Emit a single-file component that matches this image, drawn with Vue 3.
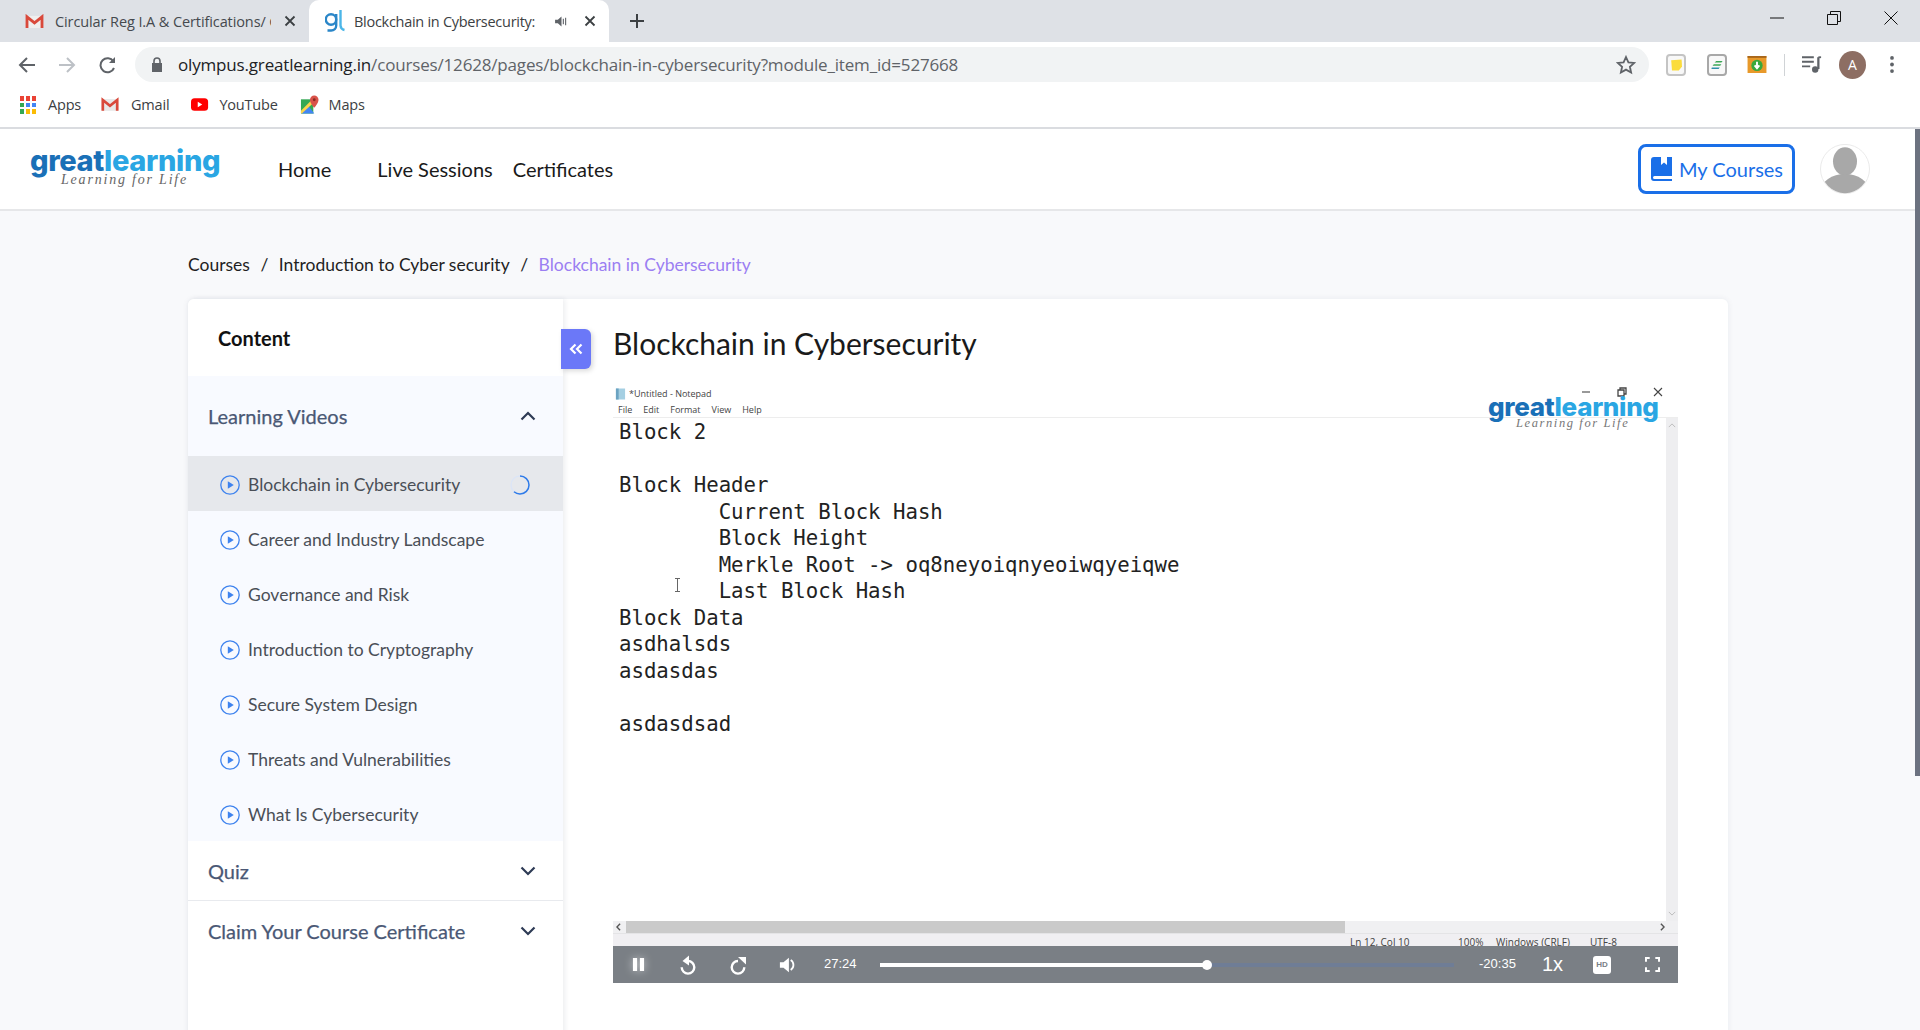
<script setup>
const bookmarks = [
  { name: 'Apps', icon: 'apps' },
  { name: 'Gmail', icon: 'gmail' },
  { name: 'YouTube', icon: 'yt' },
  { name: 'Maps', icon: 'maps' }
]
const appColors = ['#ea4335', '#ea4335', '#ea4335', '#34a853', '#4285f4', '#4285f4', '#34a853', '#fbbc05', '#fbbc05']
const lessons = [
  'Blockchain in Cybersecurity',
  'Career and Industry Landscape',
  'Governance and Risk',
  'Introduction to Cryptography',
  'Secure System Design',
  'Threats and Vulnerabilities',
  'What Is Cybersecurity'
]
const noteLines = [
  'Block 2',
  '',
  'Block Header',
  '\tCurrent Block Hash',
  '\tBlock Height',
  '\tMerkle Root -> oq8neyoiqnyeoiwqyeiqwe',
  '\tLast Block Hash',
  'Block Data',
  'asdhalsds',
  'asdasdas',
  '',
  'asdasdsad'
]
</script>

<template>
  <div class="window">
    <!-- tab strip -->
    <div class="tabstrip">
      <div class="tab">
        <svg class="gmail" viewBox="0 0 20 16"><path d="M1 2h18v13H1z" fill="#efefef" /><path d="M2 15V3l8 6.500L18 3v12" fill="none" stroke="#d9493b" stroke-width="3" /></svg>
        <span class="tab-title">Circular Reg I.A &amp; Certifications/ C</span>
        <svg class="tab-x" viewBox="0 0 12 12"><path d="M1.500 1.500l9 9M10.500 1.500l-9 9" stroke="#3c4043" stroke-width="1.800" /></svg>
      </div>
      <div class="tab active">
        <svg class="gl-icon" viewBox="0 0 21 24">
          <circle cx="6" cy="9.500" r="5.200" fill="none" stroke="#2a86c8" stroke-width="2.400" />
          <path d="M11.200 4v11.500a5 5 0 0 1-5 5H2.500" fill="none" stroke="#2a86c8" stroke-width="2.400" />
          <path d="M15.500 0v15.500a5 5 0 0 0 4 4.500" fill="none" stroke="#4bb6e8" stroke-width="2.400" />
        </svg>
        <span class="tab-title t2">Blockchain in Cybersecurity: I</span>
        <svg class="speaker" viewBox="0 0 14 12"><path d="M0 4h3l4-3.500v11L3 8H0z" fill="#5f6368" /><path d="M9 3v6M11.500 2v8" stroke="#5f6368" stroke-width="1.200" /></svg>
        <svg class="tab-x" viewBox="0 0 12 12"><path d="M1.500 1.500l9 9M10.500 1.500l-9 9" stroke="#3c4043" stroke-width="1.800" /></svg>
      </div>
      <svg class="newtab" viewBox="0 0 14 14"><path d="M7 0v14M0 7h14" stroke="#3c4043" stroke-width="2" /></svg>
      <div class="winctl">
        <svg viewBox="0 0 14 14"><path d="M0 7h14" stroke="#111" stroke-width="1" /></svg>
        <svg viewBox="0 0 14 14"><path d="M.5 3.500h10v10H.5zM3.500 3V.5h10v10H11" fill="none" stroke="#111" stroke-width="1" /></svg>
        <svg viewBox="0 0 14 14"><path d="M.5.5l13 13M13.500.5l-13 13" stroke="#111" stroke-width="1" /></svg>
      </div>
    </div>

    <!-- toolbar -->
    <div class="toolbar">
      <svg class="nav" viewBox="0 0 18 18"><path d="M17 9H2M9 2L2 9l7 7" fill="none" stroke="#5f6368" stroke-width="2" /></svg>
      <svg class="nav" viewBox="0 0 18 18"><path d="M1 9h15M9 2l7 7-7 7" fill="none" stroke="#bdc1c6" stroke-width="2" /></svg>
      <svg class="nav reload" viewBox="0 0 18 18"><path d="M15 12a7 7 0 1 1-.6-6.500" fill="none" stroke="#5f6368" stroke-width="2" /><path d="M16 1v6h-6z" fill="#5f6368" /></svg>
      <div class="omnibox">
        <svg class="lock" viewBox="0 0 12 15"><path d="M1 6h10v9H1z" fill="#5f6368" /><path d="M3 6V4a3 3 0 0 1 6 0v2" fill="none" stroke="#5f6368" stroke-width="1.600" /></svg>
        <span class="url"><b>olympus.greatlearning.in</b>/courses/12628/pages/blockchain-in-cybersecurity?module_item_id=527668</span>
        <svg class="star" viewBox="0 0 20 20"><path d="M10 2l2.400 5.300 5.800.6-4.300 3.900 1.200 5.700L10 14.600l-5.100 2.900 1.200-5.700-4.300-3.900 5.800-.6z" fill="none" stroke="#5f6368" stroke-width="1.800" /></svg>
      </div>
      <div class="ext-box"><svg viewBox="0 0 20 22"><path d="M4 5l13-1 .5 9-4 5H5z" fill="#fbdc3c" /></svg></div>
      <div class="ext-box gray"><svg viewBox="0 0 20 22"><path d="M9 6h8l-1.500 2H7zM6 10h9.500L14 12H4.500z" fill="#3aa655" /><path d="M3.500 14h10l-1.500 2H3z" fill="#2f8fa8" /></svg></div>
      <svg class="ext-folder" viewBox="0 0 20 18"><path d="M0 0h20v18H0z" fill="#e8992a" /><path d="M0 0h20v2H0z" fill="#a9671b" /><circle cx="10" cy="10" r="6" fill="#38a83c" /><path d="M10 6v6M7.500 10l2.500 3 2.500-3" fill="none" stroke="#fff" stroke-width="2" /></svg>
      <i class="tool-sep"></i>
      <svg class="media" viewBox="0 0 22 20"><path d="M0 2h13M0 7h13M0 12h9" stroke="#5f6368" stroke-width="2" /><path d="M18 2v13" stroke="#5f6368" stroke-width="2.500" /><path d="M18 2h3" stroke="#5f6368" stroke-width="2" /><circle cx="14.500" cy="15.500" r="3.500" fill="#5f6368" /></svg>
      <span class="profile">A</span>
      <svg class="kebab" viewBox="0 0 4 18"><circle cx="2" cy="2" r="2" fill="#5f6368" /><circle cx="2" cy="9" r="2" fill="#5f6368" /><circle cx="2" cy="16" r="2" fill="#5f6368" /></svg>
    </div>

    <!-- bookmarks -->
    <div class="bookmarks">
      <div v-for="b in bookmarks" :key="b.name" class="bookmark">
        <span v-if="b.icon === 'apps'" class="apps-grid"><i v-for="(c, i) in appColors" :key="i" :style="{ background: c }"></i></span>
        <svg v-else-if="b.icon === 'gmail'" class="bm-icon" viewBox="0 0 20 16"><path d="M1 2h18v13H1z" fill="#e8e8e8" /><path d="M2 15V3l8 6.500L18 3v12" fill="none" stroke="#d9493b" stroke-width="3" /></svg>
        <svg v-else-if="b.icon === 'yt'" class="bm-icon" viewBox="0 0 20 16"><rect x="0" y="1" width="19" height="14" rx="4" fill="#f00" /><path d="M7.500 5v6l5-3z" fill="#fff" /></svg>
        <svg v-else class="bm-icon maps" viewBox="0 0 20 20"><path d="M1 4h13v15H1z" fill="#34a853" /><path d="M1 19L9 11l6 8z" fill="#4285f4" /><path d="M1 16L12 5h2v3L2 19H1z" fill="#fbd44a" /><path d="M15 0a4.500 4.500 0 0 1 4.500 4.500C19.500 8 15 13 15 13s-4.500-5-4.500-8.500A4.500 4.500 0 0 1 15 0z" fill="#d9534a" /><circle cx="15" cy="4.500" r="1.500" fill="#8a2d24" /></svg>
        <span>{{ b.name }}</span>
      </div>
    </div>

    <!-- page -->
    <div class="page">
      <header class="site-header">
        <div class="logo">
          <div class="logo-word"><span class="dark">great</span><span class="light">learning</span></div>
          <div class="logo-tag">Learning for Life</div>
        </div>
        <nav class="site-nav">
          <a class="home">Home</a>
          <a class="live">Live Sessions</a>
          <a>Certificates</a>
        </nav>
        <button class="my-courses">
          <svg viewBox="0 0 21 24"><path d="M3 0h18v19H3.500a1.500 1.500 0 0 0 0 3H21v2H3a3 3 0 0 1-3-3V3a3 3 0 0 1 3-3z" fill="#1a6fe8" /><path d="M10 0v8l3-2.500L16 8V0z" fill="#fff" /></svg>
          My Courses
        </button>
        <svg class="avatar" viewBox="0 0 50 60" preserveAspectRatio="none">
          <ellipse cx="25" cy="30" rx="24.500" ry="29.500" fill="#fff" stroke="#e8e8e8" />
          <clipPath id="av"><ellipse cx="25" cy="30" rx="24" ry="29" /></clipPath>
          <g clip-path="url(#av)" fill="#a8a8a8">
            <ellipse cx="25" cy="21" rx="12" ry="17" />
            <ellipse cx="25" cy="56" rx="24" ry="20" />
          </g>
        </svg>
      </header>

      <div class="crumbs">
        <a>Courses</a><i>/</i><a>Introduction to Cyber security</a><i>/</i><a class="current">Blockchain in Cybersecurity</a>
      </div>

      <div class="layout">
        <aside class="sidebar">
          <div class="side-title">Content</div>
          <div class="group-head open">
            Learning Videos
            <svg viewBox="0 0 16 10"><path d="M1.500 8.500L8 2l6.500 6.500" fill="none" stroke="#2e3b55" stroke-width="2.200" /></svg>
          </div>
          <ul class="lessons">
            <li v-for="(l, i) in lessons" :key="l" :class="{ active: i === 0 }">
              <svg class="play" viewBox="0 0 20 20"><circle cx="10" cy="10" r="9.200" fill="none" stroke="#3f83ee" stroke-width="1.300" /><path d="M7.800 6.300v7.400l6-3.700z" fill="#3f83ee" /></svg>
              <span>{{ l }}</span>
              <svg v-if="i === 0" class="spinner" viewBox="0 0 20 20"><circle cx="10" cy="10" r="9" fill="none" stroke="#dbe5f7" stroke-width="1.300" /><path d="M10 1a9 9 0 0 1 0 18 9 9 0 0 1-6-2.300" fill="none" stroke="#2f7be8" stroke-width="1.500" /></svg>
            </li>
          </ul>
          <div class="group-head">
            Quiz
            <svg viewBox="0 0 16 10"><path d="M1.500 1.500L8 8l6.500-6.500" fill="none" stroke="#2e3b55" stroke-width="2.200" /></svg>
          </div>
          <div class="group-head last">
            Claim Your Course Certificate
            <svg viewBox="0 0 16 10"><path d="M1.500 1.500L8 8l6.500-6.500" fill="none" stroke="#2e3b55" stroke-width="2.200" /></svg>
          </div>
          <button class="collapse">
            <svg viewBox="0 0 14 12"><path d="M6.500 1.500L2 6l4.500 4.500M12.500 1.500L8 6l4.500 4.500" fill="none" stroke="#fff" stroke-width="2.200" /></svg>
          </button>
        </aside>

        <main class="content">
          <h1>Blockchain in Cybersecurity</h1>
          <div class="player">
            <div class="np-title">
              <svg viewBox="0 0 12 12"><path d="M1 0h10v12H1z" fill="#a5cfe2" /><path d="M1 0h3v12H1z" fill="#6ba3c2" /></svg>
              *Untitled - Notepad
            </div>
            <div class="np-menu"><span>File</span><span>Edit</span><span>Format</span><span>View</span><span>Help</span></div>
            <div class="np-body">
              <div class="np-text">
                <div v-for="(line, i) in noteLines" :key="i" class="np-line">{{ line }}</div>
              </div>
              <div class="np-vscroll">
                <svg viewBox="0 0 10 6"><path d="M1 5l4-4 4 4" fill="none" stroke="#bbb" stroke-width="1.200" /></svg>
                <svg viewBox="0 0 10 6"><path d="M1 1l4 4 4-4" fill="none" stroke="#bbb" stroke-width="1.200" /></svg>
              </div>
            </div>
            <div class="np-hscroll">
              <svg viewBox="0 0 6 10"><path d="M5 1L1 5l4 4" fill="none" stroke="#555" stroke-width="1.800" /></svg>
              <div class="np-thumb"></div>
              <svg viewBox="0 0 6 10"><path d="M1 1l4 4-4 4" fill="none" stroke="#555" stroke-width="1.800" /></svg>
            </div>
            <div class="np-status">
              <span class="s1">Ln 12, Col 10</span><span class="s2">100%</span><span class="s3">Windows (CRLF)</span><span class="s4">UTF-8</span>
            </div>

            <div class="controls">
              <svg class="c-pause" viewBox="0 0 14 16"><path d="M1 1h4.500v14H1zM8.500 1H13v14H8.500z" fill="#fff" /></svg>
              <svg class="c-icon" viewBox="0 0 18 20"><path d="M9 6a6.300 6.300 0 1 1-6.300 6.300" fill="none" stroke="#fff" stroke-width="2.400" /><path d="M10 .5L3.500 6l6.500 4.500z" fill="#fff" /></svg>
              <svg class="c-icon" viewBox="0 0 18 20"><path d="M9 6a6.300 6.300 0 1 0 6.300 6.300" fill="none" stroke="#fff" stroke-width="2.400" /><path d="M9 2h8v7.500z" fill="#fff" /></svg>
              <svg class="c-icon" viewBox="0 0 20 20"><path d="M1 7h4l6-5v16l-6-5H1z" fill="#fff" /><path d="M13 4.500a6.500 6.500 0 0 1 0 11" fill="none" stroke="#fff" stroke-width="2" /></svg>
              <span class="c-time">27:24</span>
              <div class="c-track"><div class="c-played"><i></i></div></div>
              <span class="c-remain">-20:35</span>
              <span class="c-speed">1x</span>
              <span class="c-hd">HD</span>
              <svg class="c-full" viewBox="0 0 16 16"><path d="M1 5V1h4M11 1h4v4M15 11v4h-4M5 15H1v-4" fill="none" stroke="#fff" stroke-width="2.200" /></svg>
            </div>

            <div class="np-overlay">
              <div class="np-winctl">
                <svg viewBox="0 0 10 10"><path d="M1 5h8" stroke="#555" stroke-width="1.200" /></svg>
                <svg viewBox="0 0 10 10"><path d="M1 3h6v6H1zM3 3V1h6v6H7" fill="none" stroke="#444" stroke-width="1.300" /></svg>
                <svg viewBox="0 0 10 10"><path d="M1 1l8 8M9 1L1 9" stroke="#444" stroke-width="1.100" /></svg>
              </div>
              <div class="logo small">
                <div class="logo-word"><span class="dark">great</span><span class="light">learning</span></div>
                <div class="logo-tag">Learning for Life</div>
              </div>
            </div>
            <svg class="ibeam" viewBox="0 0 7 14"><path d="M1 .5h5M3.500.5v13M1 13.500h5" fill="none" stroke="#666" /></svg>
          </div>
        </main>
      </div>
      <div class="page-scroll"></div>
    </div>
  </div>
</template>

<style>
html, body { margin: 0; background: #fff; }
</style>

<style scoped>
.window {
  width: 1920px;
  height: 1030px;
  overflow: hidden;
  display: flex;
  flex-direction: column;
  font-family: "Lato", "Liberation Sans", sans-serif;
}
.tabstrip {
  height: 42px;
  flex: none;
  background: #dee1e6;
  display: flex;
  align-items: flex-end;
  position: relative;
  padding-left: 9px;
  font-family: "Open Sans", "Liberation Sans", sans-serif;
}
.tab {
  width: 300px;
  height: 42px;
  display: flex;
  align-items: center;
  padding-left: 16px;
  box-sizing: border-box;
  font-size: 14.500px;
  color: #45494e;
  flex: none;
}
.tab.active {
  background: #fff;
  border-radius: 10px 10px 0 0;
  color: #3c4043;
}
.gmail { width: 19px; height: 15px; margin-right: 11px; flex: none; }
.tab-title { width: 216px; overflow: hidden; white-space: nowrap; flex: none; letter-spacing: -0.1px; }
.tab-title.t2 { width: 183px; letter-spacing: -0.28px; }
.tab-x { width: 12px; height: 12px; margin-left: 13px; flex: none; }
.tab.active .tab-x { margin-left: 16px; }
.gl-icon { width: 21px; height: 24px; margin: 2px 8px 0 0; flex: none; }
.speaker { width: 13px; height: 11px; margin-left: 18px; flex: none; }
.newtab { width: 14px; height: 14px; margin: 0 0 14px 21px; }
.winctl {
  margin-left: auto;
  display: flex;
  gap: 43px;
  height: 42px;
  padding: 11px 22px 0 0;
  box-sizing: border-box;
}
.winctl svg { width: 14px; height: 14px; }

.toolbar {
  height: 45px;
  flex: none;
  display: flex;
  align-items: center;
  padding-left: 18px;
  background: #fff;
  position: relative;
}
.nav { width: 18px; height: 18px; margin-right: 22px; flex: none; }
.nav.reload { margin-left: 1px; margin-right: 21px; }
.omnibox {
  width: 1514px;
  margin-left: -3px;
  height: 35px;
  border-radius: 18px;
  background: #f1f3f4;
  display: flex;
  align-items: center;
  box-sizing: border-box;
  padding-left: 16px;
  flex: none;
  font-family: "Open Sans", "Liberation Sans", sans-serif;
}
.lock { width: 12px; height: 15px; flex: none; margin-right: 15px; }
.url { font-size: 17px; color: #5f6368; white-space: nowrap; letter-spacing: -0.17px; }
.url b { font-weight: 400; color: #202124; }
.star { width: 20px; height: 20px; margin-left: auto; margin-right: 13px; flex: none; }
.ext-box {
  width: 16px;
  height: 18px;
  border: 2px solid #c4c4c4;
  border-radius: 4px;
  margin-left: 17px;
  flex: none;
  background: #f8f8f8;
}
.ext-box.gray { border-color: #a8a8a8; margin-left: 21px; }
.ext-box svg { width: 16px; height: 18px; display: block; }
.ext-folder { width: 20px; height: 17px; margin-left: 20px; flex: none; }
.tool-sep { width: 1px; height: 22px; background: #d0d3d6; margin-left: 17px; flex: none; }
.media { width: 20px; height: 19px; margin-left: 17px; flex: none; }
.profile {
  width: 27px;
  height: 28px;
  border-radius: 50%;
  background: #8d6e63;
  color: #fff;
  font: 14px/28px "Open Sans", sans-serif;
  text-align: center;
  margin-left: 17px;
  flex: none;
}
.kebab { width: 4px; height: 17px; margin-left: 24px; flex: none; }

.bookmarks {
  height: 35px;
  padding: 0 0 5px 20px;
  flex: none;
  display: flex;
  align-items: center;
  gap: 20px;
  background: #fff;
  font: 14.500px "Open Sans", "Liberation Sans", sans-serif;
  color: #3c4043;
  border-bottom: 2px solid #dadce0;
}
.bookmark { display: flex; align-items: center; gap: 12px; letter-spacing: -0.2px; }
.bookmark:nth-child(n + 3) { gap: 10px; margin-left: 2px; }
.apps-grid {
  width: 16px;
  height: 17px;
  display: grid;
  grid-template-columns: repeat(3, 4px);
  grid-auto-rows: 4.500px;
  gap: 2px;
}
.bm-icon { width: 18px; height: 15px; flex: none; }
.bm-icon.maps { width: 19px; height: 20px; }

.page {
  flex: 1;
  background: #f8f9fb;
  position: relative;
  overflow: hidden;
  color: #1d1d1d;
}
.site-header {
  height: 80px;
  background: #fff;
  border-bottom: 2px solid #e6e7e9;
  display: flex;
  align-items: center;
  padding: 0 50px 0 30px;
}
.logo { width: 190px; flex: none; margin-top: -5px; }
.logo-word {
  font: 800 29px/25px "Inter", "Liberation Sans", sans-serif;
  letter-spacing: -0.35px;
}
.logo-word .dark { color: #1a70b7; }
.logo-word .light { color: #2aa6e3; }
.logo-tag {
  font: italic 14px/13px "Liberation Serif", serif;
  color: #666;
  letter-spacing: 1.800px;
  padding-left: 31px;
}
.site-nav {
  display: flex;
  font-size: 20px;
  margin-left: 58px;
  color: #1a1a1a;
}
.site-nav .home { margin-right: 46px; }
.site-nav .live { margin-right: 20px; }
.my-courses {
  margin-left: auto;
  width: 157px;
  height: 50px;
  border: 3px solid #1a6fe8;
  border-radius: 8px;
  background: #fff;
  color: #1a6fe8;
  font: 20px "Lato", sans-serif;
  display: flex;
  align-items: center;
  gap: 7px;
  padding: 0 0 0 10px;
  box-sizing: border-box;
}
.my-courses svg { width: 21px; height: 24px; flex: none; }
.avatar { width: 50px; height: 50px; margin-left: 25px; flex: none; }

.crumbs {
  display: flex;
  align-items: center;
  height: 22px;
  font-size: 17.500px;
  padding: 42px 0 0 188px;
  color: #1f1f1f;
  white-space: nowrap;
}
.crumbs i { font-style: normal; margin: 0 10.500px; }
.crumbs .current { color: #9b7ff2; }

.layout {
  width: 1540px;
  margin: 24px 0 0 188px;
  display: flex;
  background: #fff;
  border-radius: 6px;
  box-shadow: 0 0 6px rgba(30, 40, 70, 0.07);
  height: 900px;
}
.sidebar {
  width: 375px;
  flex: none;
  position: relative;
  box-shadow: 2px 0 5px rgba(30, 40, 70, 0.08);
  background: #fff;
  border-radius: 6px 0 0 6px;
}
.side-title {
  height: 77px;
  line-height: 78px;
  padding-left: 30px;
  font-size: 20px;
  font-weight: 700;
  color: #111;
}
.group-head {
  height: 59px;
  display: flex;
  align-items: center;
  justify-content: space-between;
  padding: 0 27px 0 20px;
  font-size: 20px;
  color: #4a5875;
  border-bottom: 1px solid #e8eaee;
  -webkit-text-stroke: 0.25px #4a5875;
}
.group-head.open { height: 80px; background: #f8faff; border-bottom: none; }
.group-head.last { border-bottom: none; }
.group-head svg { width: 16px; height: 10px; }
.lessons { list-style: none; margin: 0; padding: 0; background: #f8faff; }
.lessons li {
  height: 55px;
  box-sizing: border-box;
  display: flex;
  align-items: center;
  padding: 2px 0 0 32px;
  font-size: 17.500px;
  color: #4a4f57;
}
.lessons li.active { background: #e6e8ec; }
.play { width: 20px; height: 20px; margin-right: 8px; flex: none; }
.spinner { width: 20px; height: 20px; margin-left: auto; margin-right: 33px; }
.collapse {
  position: absolute;
  left: 373px;
  top: 30px;
  width: 30px;
  height: 40px;
  border: none;
  background: #6b78f8;
  border-radius: 0 6px 6px 0;
  padding: 0;
  box-shadow: 2px 2px 5px rgba(0, 0, 0, 0.15);
}
.collapse svg { width: 14px; height: 12px; display: block; margin: 0 auto; }

.content { flex: 1; padding: 0 50px; }
h1 {
  margin: 0;
  padding-top: 25px;
  height: 57px;
  font-weight: 400;
  font-size: 30px;
  line-height: 38px;
  color: #1a1a1a;
}
.player {
  width: 1065px;
  height: 602px;
  position: relative;
  background: #fff;
  display: flex;
  flex-direction: column;
  font-family: "Open Sans", "Liberation Sans", sans-serif;
  overflow: hidden;
}
.np-title {
  display: flex;
  align-items: center;
  gap: 3px;
  font-size: 9px;
  color: #444;
  padding: 5px 0 0 2px;
  height: 15px;
  flex: none;
}
.np-title svg { width: 11px; height: 12px; }
.np-menu {
  display: flex;
  gap: 11px;
  font-size: 9px;
  color: #444;
  padding: 2px 0 0 5px;
  height: 14px;
  line-height: 14px;
  border-bottom: 1px solid #ededed;
  flex: none;
}
.np-body { flex: 1; display: flex; min-height: 0; }
.np-text {
  flex: 1;
  padding: 1px 0 0 6px;
  font: 20.700px/26.500px "DejaVu Sans Mono", "Liberation Mono", monospace;
  tab-size: 8;
  color: #222;
}
.np-line { white-space: pre; height: 26.500px; }
.np-vscroll {
  width: 12px;
  background: #eeeef0;
  display: flex;
  flex-direction: column;
  justify-content: space-between;
  align-items: center;
  padding: 5px 0;
  box-sizing: border-box;
}
.np-vscroll svg { width: 8px; height: 5px; }
.np-hscroll {
  height: 12px;
  background: #f0f0f2;
  display: flex;
  align-items: center;
  padding: 0 13px 0 3px;
  flex: none;
}
.np-hscroll svg { width: 5px; height: 8px; flex: none; }
.np-thumb { width: 719px; height: 12px; background: #cacaca; margin: 0 auto 0 5px; }
.np-status {
  height: 12px;
  background: #f0eff2;
  border-top: 1px solid #e4e4e6;
  font-size: 10px;
  color: #444;
  line-height: 17px;
  flex: none;
  overflow: hidden;
  display: flex;
  padding-left: 737px;
}
.np-status span { white-space: nowrap; }
.np-status .s1 { width: 108px; }
.np-status .s2 { width: 38px; }
.np-status .s3 { width: 94px; }
.controls {
  height: 37px;
  background: #7a7f85;
  display: flex;
  align-items: center;
  color: #fff;
  flex: none;
  padding-left: 19px;
  font-family: "Liberation Sans", Arial, sans-serif;
}
.c-pause { width: 13px; height: 15px; flex: none; margin-right: 34px; filter: drop-shadow(0 0 4px rgba(255, 255, 255, 0.6)); }
.c-icon { width: 18px; height: 20px; flex: none; margin-right: 32px; }
.c-time { font-size: 13px; width: 56px; margin: -2px 0 0 -5px; }
.c-track { width: 574px; height: 4px; background: #6f7d96; flex: none; }
.c-played { width: 327px; height: 4px; background: #fff; position: relative; }
.c-played i {
  position: absolute;
  right: -5px;
  top: -3px;
  width: 10px;
  height: 10px;
  border-radius: 50%;
  background: #fff;
}
.c-remain { font-size: 13px; margin: -2px 0 0 25px; width: 63px; }
.c-speed { font-size: 20px; width: 51px; }
.c-hd {
  width: 18px;
  height: 18px;
  background: #fff;
  border-radius: 3px;
  color: #7a7f85;
  font-size: 8px;
  font-weight: 700;
  line-height: 18px;
  text-align: center;
  flex: none;
}
.c-full { width: 15px; height: 15px; margin-left: 34px; flex: none; }
.np-overlay {
  position: absolute;
  right: 15px;
  top: 6px;
  width: 172px;
}
.np-winctl { display: flex; justify-content: flex-end; gap: 26px; height: 10px; }
.np-winctl svg { width: 10px; height: 10px; }
.logo.small { width: 172px; margin: -1px 0 0 -3px; }
.logo.small .logo-word { font-size: 26px; line-height: 22px; letter-spacing: -0.3px; }
.logo.small .logo-tag { font-size: 12.500px; line-height: 10px; padding-left: 28px; color: #777; letter-spacing: 1.600px; }
.ibeam { position: absolute; left: 61px; top: 197px; width: 7px; height: 14px; }
.page-scroll {
  position: absolute;
  right: 0;
  top: 0;
  width: 5px;
  height: 647px;
  background: #6c7280;
}
</style>
